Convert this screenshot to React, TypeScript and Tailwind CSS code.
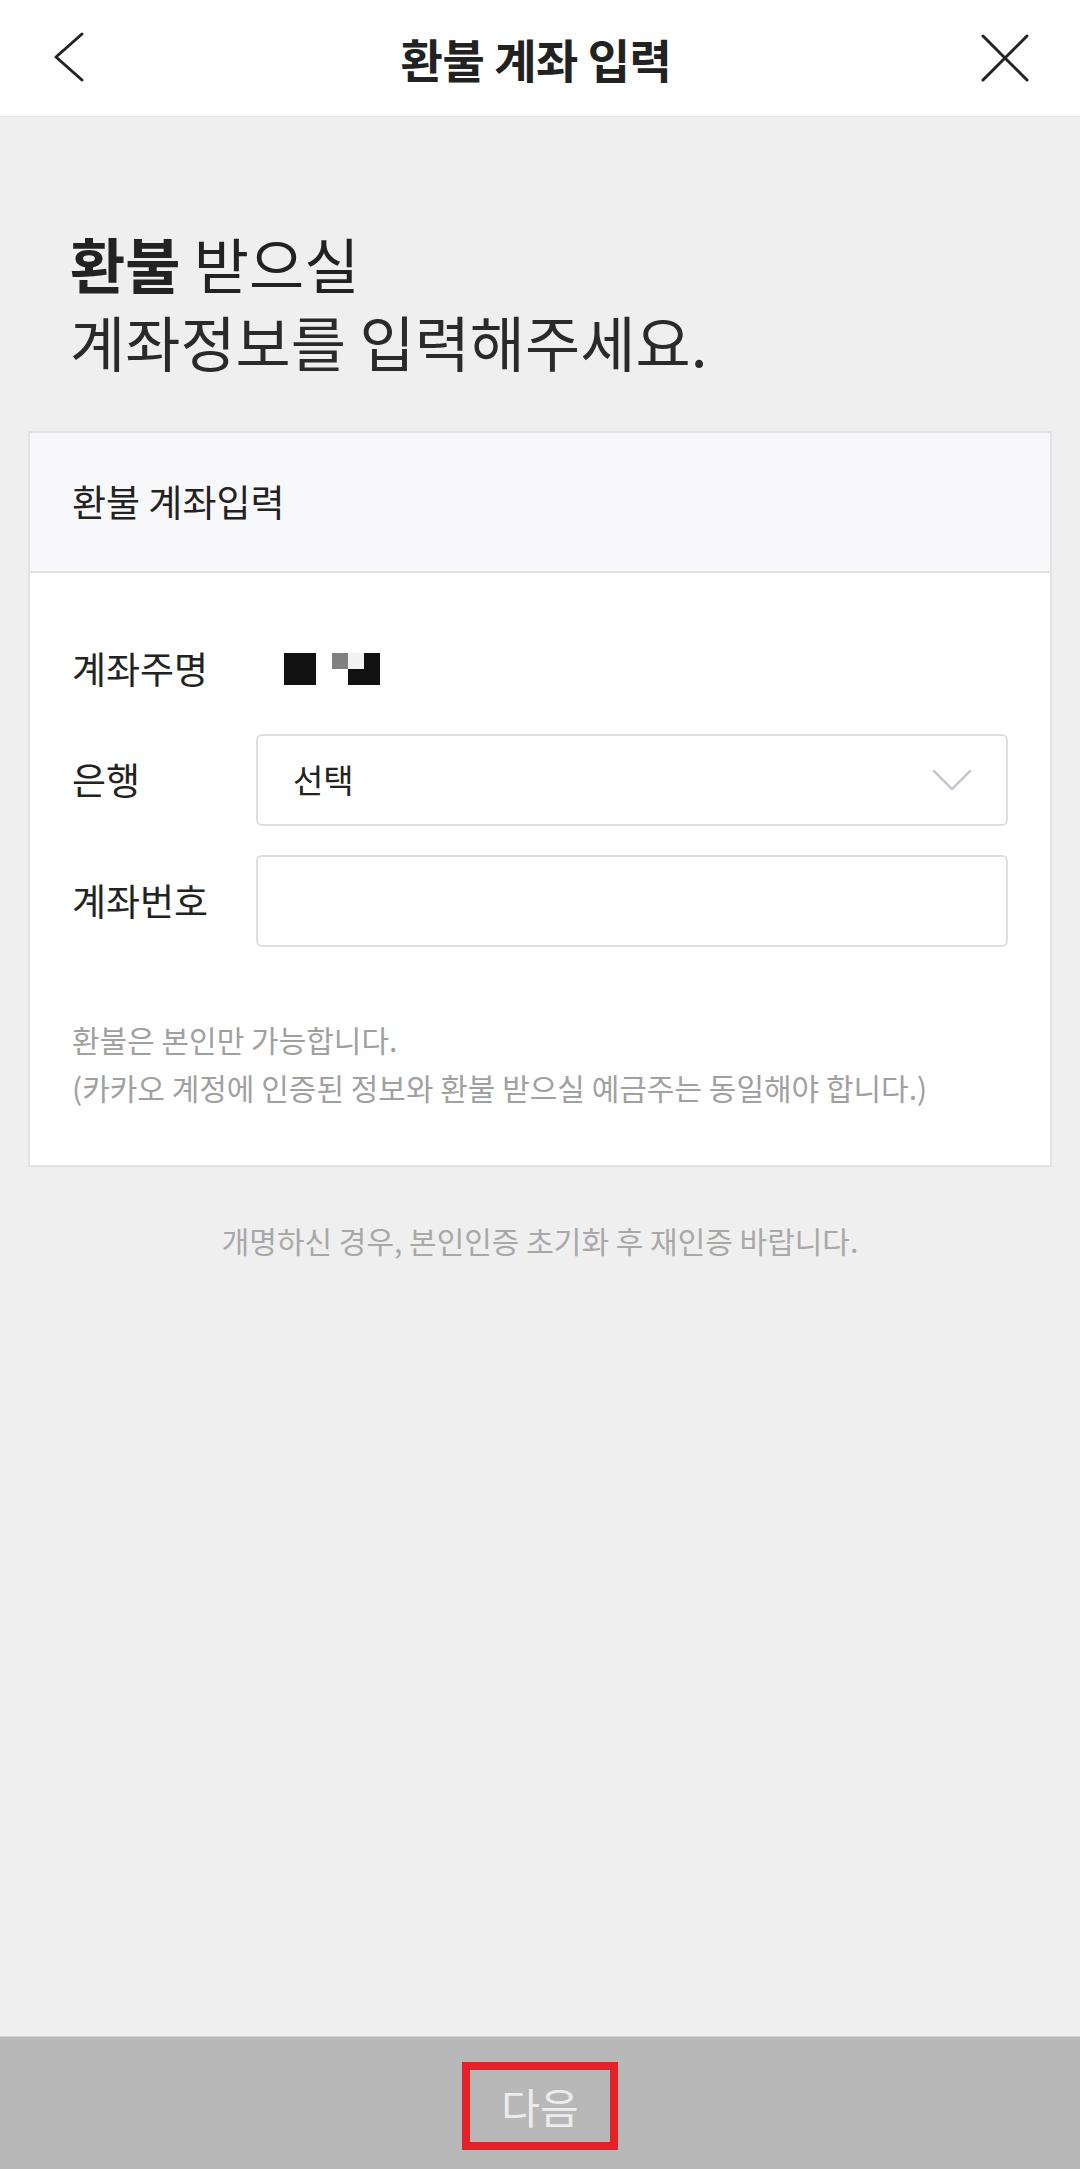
import React from "react";

const FONT = { fontFamily: '"Noto Sans CJK KR", "Noto Sans", sans-serif' };

function BackIcon() {
  return (
    <svg width="40" height="56" viewBox="0 0 40 56" fill="none">
      <path d="M30 4 L4 27 L30 50" stroke="#222" strokeWidth="3" strokeLinecap="round" strokeLinejoin="round" />
    </svg>
  );
}

function CloseIcon() {
  return (
    <svg width="50" height="50" viewBox="0 0 50 50" fill="none">
      <path d="M3 3 L47 47 M47 3 L3 47" stroke="#222" strokeWidth="3" strokeLinecap="round" />
    </svg>
  );
}

function ChevronDown() {
  return (
    <svg width="40" height="22" viewBox="0 0 40 22" fill="none">
      <path d="M2 2 L20 20 L38 2" stroke="#c6c9d1" strokeWidth="2.5" strokeLinecap="round" strokeLinejoin="round" />
    </svg>
  );
}

export default function App() {
  return (
    <div className="min-h-[2169px] w-[1080px] flex flex-col bg-[#efefef]" style={FONT}>
      {/* Header */}
      <div className="h-[117px] bg-white border-b border-[#e6e6e6] flex items-center justify-between pl-[52px] pr-[52px]">
        <div className="w-[40px] h-[56px] flex items-center">
          <BackIcon />
        </div>
        <div className="text-[46px] font-bold text-[#222] leading-none tracking-[-0.5px]">환불 계좌 입력</div>
        <div className="w-[50px] h-[50px] flex items-center justify-center mr-[-2px]">
          <CloseIcon />
        </div>
      </div>

      {/* Content */}
      <div className="flex-1 flex flex-col">
        <div className="pt-[107px] pl-[70px] text-[60px] leading-[78px] text-[#222]">
          <div>
            <span className="font-bold">환불</span> 받으실
          </div>
          <div className="text-[#2a2a2a]">계좌정보를 입력해주세요.</div>
        </div>

        {/* Card */}
        <div className="mt-[51px] mx-[28px] border-2 border-[#e2e2e2] bg-white">
          <div className="h-[140px] bg-[#f8f8fa] border-b-2 border-[#e2e2e2] flex items-center pl-[42px] text-[37px] text-[#222]">
            환불 계좌입력
          </div>
          <div className="pt-[64px] pl-[42px] pr-[42px] pb-[54px]">
            <div className="h-[64px] flex items-center">
              <div className="w-[184px] text-[37px] text-[#222]">계좌주명</div>
              <div className="ml-[28px] flex items-start">
                <div className="w-[32px] h-[32px] bg-[#111]" />
                <div className="ml-[16px] grid grid-cols-3 grid-rows-2 w-[48px] h-[32px]">
                  <div className="bg-[#808080]" />
                  <div className="bg-[#f2f2f2]" />
                  <div className="bg-[#111]" />
                  <div className="bg-white" />
                  <div className="bg-[#111]" />
                  <div className="bg-[#111]" />
                </div>
              </div>
            </div>
            <div className="mt-[33px] h-[92px] flex items-center">
              <div className="w-[184px] text-[37px] text-[#222]">은행</div>
              <div className="flex-1 h-[92px] border-2 border-[#dedede] rounded-[6px] flex items-center justify-between pl-[35px] pr-[34px]">
                <span className="text-[33px] text-[#222]">선택</span>
                <ChevronDown />
              </div>
            </div>
            <div className="mt-[29px] h-[92px] flex items-center">
              <div className="w-[184px] text-[37px] text-[#222]">계좌번호</div>
              <div className="flex-1 h-[92px] border-2 border-[#dedede] rounded-[6px]" />
            </div>
            <div className="mt-[68px] text-[30px] leading-[48px] text-[#a0a0a0] tracking-[0px]">
              <div>환불은 본인만 가능합니다.</div>
              <div>(카카오 계정에 인증된 정보와 환불 받으실 예금주는 동일해야 합니다.)</div>
            </div>
          </div>
        </div>

        <div className="mt-[53px] text-center text-[30px] leading-[40px] text-[#a8a8a8]">
          개명하신 경우, 본인인증 초기화 후 재인증 바랍니다.
        </div>
      </div>

      {/* Bottom bar */}
      <div className="h-[133px] bg-[#b8b8b8] border-t border-[#d0d0d0] flex items-center justify-center">
        <div className="w-[156px] h-[88px] border-[8px] border-[#e52128] flex items-center justify-center mt-[6px]">
          <span className="text-[42px] text-[#ececec] leading-none">다음</span>
        </div>
      </div>
    </div>
  );
}
